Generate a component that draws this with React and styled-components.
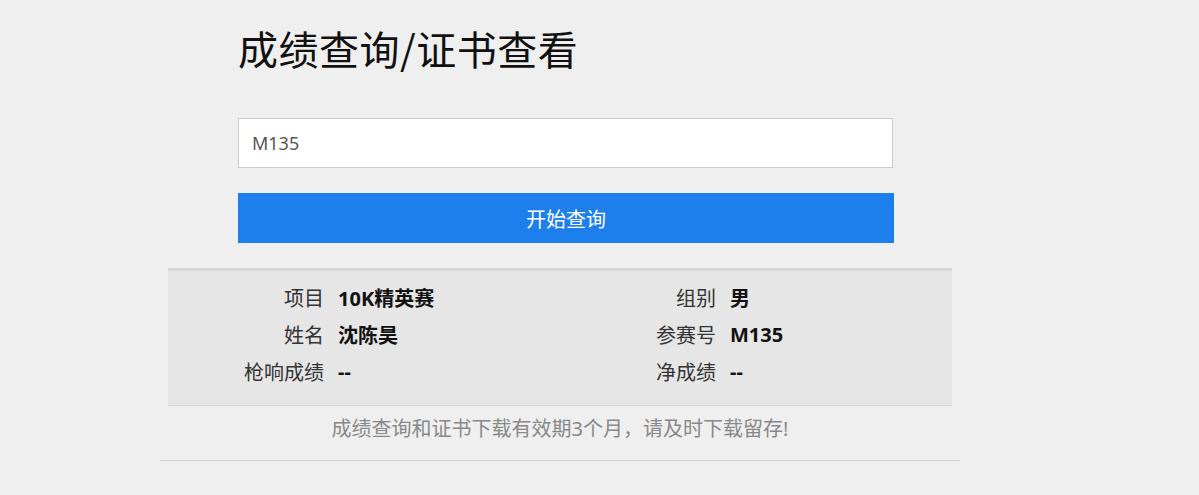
import React, { useState } from 'react';
import styled, { createGlobalStyle } from 'styled-components';

const GlobalStyle = createGlobalStyle`
  html, body {
    margin: 0;
    padding: 0;
    background: #efefef;
    font-family: 'Noto Sans', 'Noto Sans CJK SC', sans-serif;
  }
`;

const Page = styled.div`
  width: 800px;
  margin-left: 160px;
`;

const Title = styled.h1`
  margin: 24px 0 0 78px;
  font-family: 'Noto Sans CJK SC', sans-serif;
  font-size: 40px;
  line-height: 48px;
  font-weight: 400;
  letter-spacing: 0.5px;
  color: #111;
`;

const Form = styled.form`
  display: flex;
  flex-direction: column;
  gap: 25px;
  padding: 46px 66px 0 78px;
`;

const Input = styled.input`
  box-sizing: border-box;
  width: 655px;
  height: 50px;
  padding: 0 13px;
  border: 1px solid #cccccc;
  background: #fff;
  font-family: inherit;
  font-size: 18px;
  color: #555;
  outline: none;
`;

const Button = styled.button`
  height: 50px;
  width: 656px;
  border: none;
  background: #1c7fec;
  color: #fff;
  font-family: inherit;
  font-size: 20px;
  cursor: pointer;
`;

const Panel = styled.div`
  margin: 25px 8px 0;
  border-top: 3px solid #d6d6d6;
  border-bottom: 1px solid #d6d6d6;
  background: #e6e6e6;
  display: grid;
  grid-template-columns: 1fr 1fr;
  padding: 8px 0 15px;
`;

const Field = styled.div`
  display: flex;
  align-items: center;
  height: 37px;
`;

const Label = styled.span`
  width: 156px;
  text-align: right;
  font-size: 20px;
  color: #333;
`;

const Value = styled.span`
  padding-left: 14px;
  font-size: 20px;
  font-weight: 700;
  color: #111;
`;

const Notice = styled.p`
  margin: 0;
  padding: 10px 0 18px;
  text-align: center;
  font-size: 20px;
  line-height: 26px;
  color: #888;
  border-bottom: 1px solid #cfcfcf;
`;

const fields = [
  ['项目', '10K精英赛'],
  ['组别', '男'],
  ['姓名', '沈陈昊'],
  ['参赛号', 'M135'],
  ['枪响成绩', '--'],
  ['净成绩', '--'],
];

export default function App() {
  const [bib, setBib] = useState('M135');

  return (
    <Page>
      <GlobalStyle />
      <Title>成绩查询/证书查看</Title>
      <Form onSubmit={e => e.preventDefault()}>
        <Input value={bib} onChange={e => setBib(e.target.value)} />
        <Button type="submit">开始查询</Button>
      </Form>
      <Panel>
        {fields.map(([label, value]) => (
          <Field key={label}>
            <Label>{label}</Label>
            <Value>{value}</Value>
          </Field>
        ))}
      </Panel>
      <Notice>成绩查询和证书下载有效期3个月，请及时下载留存!</Notice>
    </Page>
  );
}
